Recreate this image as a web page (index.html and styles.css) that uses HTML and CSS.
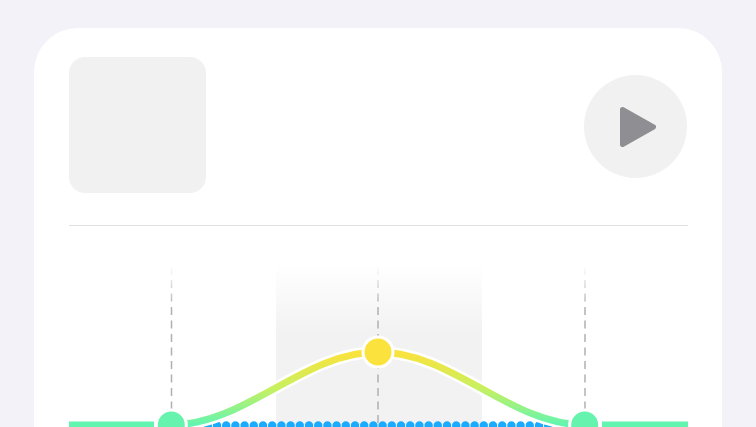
FILE: index.html
```html
<!DOCTYPE html>
<html lang="en">
<head>
	<meta charset="UTF-8">
	<title>daylight</title>
	<link rel="stylesheet" href="styles.css">
</head>
<body>
	<div class="card">
		<div class="header">
			<div class="artwork"></div>
			<div class="play">
				<svg class="play-icon" width="36" height="40" viewBox="0 0 36 40">
					<path d="M2.5 2.5 L33.5 20 L2.5 37.5 Z" />
				</svg>
			</div>
		</div>

		<svg class="chart" width="619" height="170" viewBox="0 0 619 170">
			<defs>
				<linearGradient id="shade" x1="0" y1="0" x2="0" y2="1">
					<stop offset="0" stop-color="#f2f2f2" stop-opacity="0"/>
					<stop offset="0.4" stop-color="#f2f2f2"/>
				</linearGradient>
				<linearGradient id="dash" gradientUnits="userSpaceOnUse" x1="0" y1="0" x2="0" y2="45">
					<stop offset="0" stop-color="#b0b0b4" stop-opacity="0"/>
					<stop offset="1" stop-color="#b0b0b4"/>
				</linearGradient>
				<linearGradient id="sun" gradientUnits="userSpaceOnUse" x1="0" y1="87" x2="0" y2="160">
					<stop offset="0" stop-color="#fbe23c"/>
					<stop offset="0.5" stop-color="#c8f060"/>
					<stop offset="1" stop-color="#62f5b0"/>
				</linearGradient>
			</defs>

			<!-- midday band -->
			<rect x="207" y="0" width="206" height="170" fill="url(#shade)"/>

			<!-- hour guides -->
			<path class="guide" d="M102.5 0 V146" />
			<path class="guide" d="M309 0 V170" />
			<path class="guide" d="M516 0 V146" />

			<!-- night dots -->
			<path class="dots" d="M120.4 160.5 H490" />

			<!-- sun path -->
			<path class="halo" d="M102 160 C177 160 234 87 309 87 C384 87 441 160 516 160" />
			<path class="arc" d="M102 160 C177 160 234 87 309 87 C384 87 441 160 516 160" />
			<path class="horizon" d="M0 160 H85 M533 160 H619" />

			<circle class="marker" cx="102.3" cy="160" r="15" fill="#66f3ae"/>
			<circle class="marker" cx="309" cy="87" r="15" fill="#fbe23c"/>
			<circle class="marker" cx="515.7" cy="160" r="15" fill="#66f3ae"/>
		</svg>
	</div>
</body>
</html>
```

FILE: styles.css
```css
html, body {
	height: 100%;
	overflow: hidden;
}
body {
	margin: 0px;
	padding: 28px 34px 0px 34px;
	box-sizing: border-box;
	background-color: #f2f2f8;
}
.card {
	height: 600px;
	padding: 29px 34px 0px 35px;
	background-color: #ffffff;
	border-radius: 44px;
}
.header {
	display: flex;
	justify-content: space-between;
	align-items: flex-start;
	padding-bottom: 32px;
	border-bottom: 1px solid #e0e0e0;
}
.artwork {
	width: 137px;
	height: 136px;
	background-color: #f1f1f1;
	border-radius: 16px;
}
.play {
	display: flex;
	align-items: center;
	justify-content: center;
	width: 103px;
	height: 103px;
	margin-top: 18px;
	margin-right: 1px;
	background-color: #f1f1f1;
	border-radius: 50%;
}
.play-icon {
	display: block;
	margin-left: 5px;
	fill: #8e8e93;
	stroke: #8e8e93;
	stroke-width: 5;
	stroke-linejoin: round;
}
.chart {
	display: block;
	margin-top: 39px;
	fill: none;
}
.guide {
	stroke: url(#dash);
	stroke-width: 1.5;
	stroke-dasharray: 8 5.5;
	stroke-dashoffset: -1.5;
}
.dots {
	stroke: #1aabff;
	stroke-width: 8.4;
	stroke-linecap: round;
	stroke-dasharray: 0 9.2;
}
.halo {
	stroke: #ffffff;
	stroke-width: 12;
}
.arc {
	stroke: url(#sun);
	stroke-width: 7;
}
.horizon {
	stroke: #62f5b0;
	stroke-width: 7;
}
.marker {
	stroke: #ffffff;
	stroke-width: 3;
}
```
